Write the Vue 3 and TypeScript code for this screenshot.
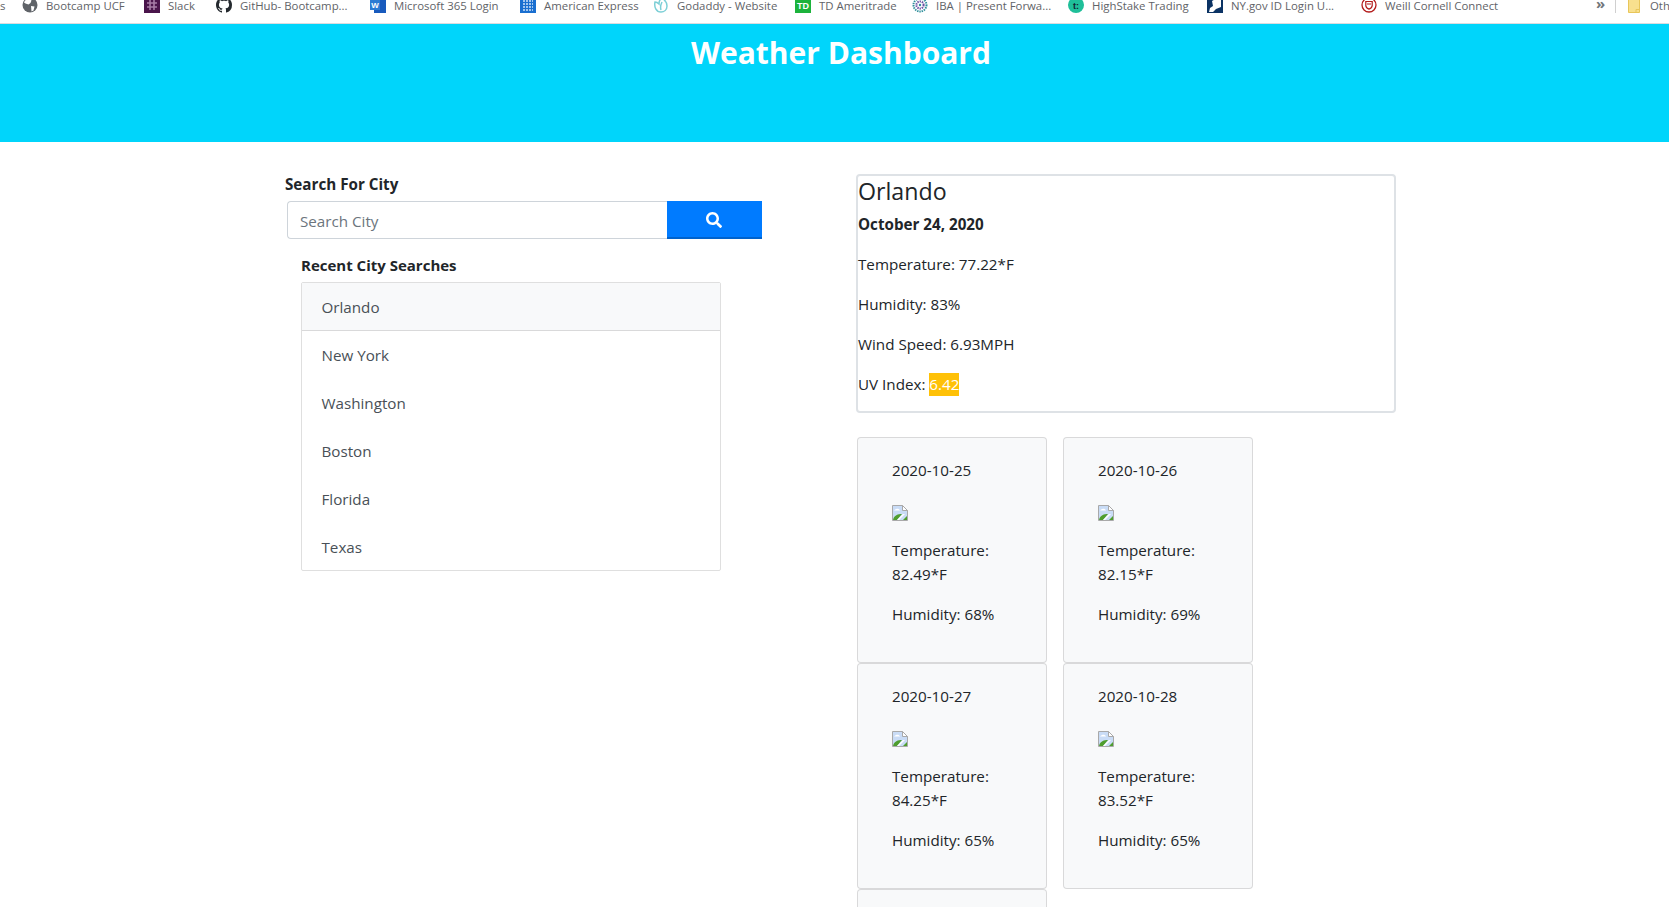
<template>
  <div class="page">
    <div class="bookmarks-bar">
      <span class="cut-off">s</span>
      <a v-for="b in bookmarks" :key="b.label" class="bookmark" :style="{ width: b.width + 'px' }">
        <svg v-if="b.kind === 'globe'" viewBox="0 0 16 16" class="fav">
          <circle cx="8" cy="8" r="7.5" fill="#5f6368" />
          <path d="M3 3.5l4-2 2.5 2-1 2.5-2 1.5-3-1-1.5-1zM9 9l3.5.5-1 4-2 1z" fill="#fff" />
        </svg>
        <svg v-else-if="b.kind === 'slack'" viewBox="0 0 16 16" class="fav">
          <rect width="16" height="16" fill="#4a154b" />
          <path d="M6 3v10M10 3v10M3 6h10M3 10h10" stroke="#a67ca6" stroke-width="1.6" />
        </svg>
        <svg v-else-if="b.kind === 'github'" viewBox="0 0 16 16" class="fav">
          <path fill="#24292e" d="M8 0C3.58 0 0 3.58 0 8c0 3.54 2.29 6.53 5.47 7.59.4.07.55-.17.55-.38 0-.19-.01-.82-.01-1.49-2.01.37-2.53-.49-2.69-.94-.09-.23-.48-.94-.82-1.13-.28-.15-.68-.52-.01-.53.63-.01 1.08.58 1.23.82.72 1.21 1.87.87 2.33.66.07-.52.28-.87.51-1.07-1.78-.2-3.64-.89-3.64-3.95 0-.87.31-1.59.82-2.15-.08-.2-.36-1.02.08-2.12 0 0 .67-.21 2.2.82.64-.18 1.32-.27 2-.27.68 0 1.36.09 2 .27 1.53-1.04 2.2-.82 2.2-.82.44 1.1.16 1.92.08 2.12.51.56.82 1.27.82 2.15 0 3.07-1.87 3.75-3.65 3.95.29.25.54.73.54 1.48 0 1.07-.01 1.93-.01 2.2 0 .21.15.46.55.38A8.013 8.013 0 0016 8c0-4.42-3.58-8-8-8z" />
        </svg>
        <svg v-else-if="b.kind === 'word'" viewBox="0 0 16 16" class="fav">
          <rect x="4" width="12" height="16" fill="#185abd" />
          <rect y="3" width="10" height="10" fill="#2b7cd3" />
          <text x="5" y="11" class="fav-text" font-size="8" fill="#fff" text-anchor="middle">W</text>
        </svg>
        <svg v-else-if="b.kind === 'amex'" viewBox="0 0 16 16" class="fav">
          <rect width="16" height="16" fill="#1a6fd0" />
          <path d="M3 4h10M3 7h10M3 10h10M3 13h10" stroke="#cfe2f7" stroke-width="1.4" stroke-dasharray="2 1" />
        </svg>
        <svg v-else-if="b.kind === 'godaddy'" viewBox="0 0 16 16" class="fav">
          <path d="M8 15C3 15 1 10 2 5c2 0 3 1 4 2 0-3 1-5 3-6 3 2 5 5 5 8 0 4-3 6-6 6zM8 13c-1-3 0-6 1-8" fill="none" stroke="#7ccfd6" stroke-width="1.5" />
        </svg>
        <svg v-else-if="b.kind === 'td'" viewBox="0 0 16 16" class="fav">
          <rect width="16" height="16" fill="#1cb33c" />
          <text x="8" y="11.5" class="fav-text" font-size="9" fill="#fff" text-anchor="middle">TD</text>
        </svg>
        <svg v-else-if="b.kind === 'iba'" viewBox="0 0 16 16" class="fav">
          <circle cx="8" cy="8" r="6.5" fill="none" stroke="#2f8f9c" stroke-width="2" stroke-dasharray="1.4 .9" />
          <circle cx="8" cy="8" r="3.6" fill="none" stroke="#6a4fa3" stroke-width="2" stroke-dasharray="1.4 .9" />
          <circle cx="8" cy="8" r="1.2" fill="#2f8f9c" />
        </svg>
        <svg v-else-if="b.kind === 'highstake'" viewBox="0 0 16 16" class="fav">
          <circle cx="8" cy="8" r="8" fill="#1fbf99" />
          <text x="8" y="11.5" class="fav-text" font-size="9" fill="#123" text-anchor="middle">t:</text>
        </svg>
        <svg v-else-if="b.kind === 'ny'" viewBox="0 0 16 16" class="fav">
          <rect width="16" height="16" fill="#0b3364" />
          <path d="M5 4l7-4h2v10l-5 2-3 3H2l1-4 3-2z" fill="#fff" />
        </svg>
        <svg v-else viewBox="0 0 16 16" class="fav">
          <circle cx="8" cy="8" r="7" fill="none" stroke="#b31b1b" stroke-width="1.3" />
          <path d="M4.8 4.5h6.4v4c0 2-1.6 3-3.2 3.6-1.6-.6-3.2-1.6-3.2-3.6zM6 7h4" fill="none" stroke="#b31b1b" stroke-width="1.2" />
        </svg>
        <span class="bookmark-label">{{ b.label }}</span>
      </a>
      <span class="more">»</span>
      <span class="bar-sep"></span>
      <svg viewBox="0 0 16 16" class="fav folder">
        <path d="M.5 0h11v15.5H.5z" fill="#f8e08e" stroke="#e8c65a" />
        <path d="M8 15.5v-3h3.5" fill="none" stroke="#e8c65a" />
      </svg>
      <span class="bookmark-label">Other bookmarks</span>
    </div>

    <header class="hero">
      <h1>Weather Dashboard</h1>
    </header>

    <main class="content">
      <section class="left">
        <label class="strong">Search For City</label>
        <div class="search-row">
          <input class="search-input" type="text" placeholder="Search City" />
          <button class="search-btn" type="button" aria-label="Search">
            <svg viewBox="0 0 512 512" width="16" height="16">
              <path fill="#fff" d="M505 442.7L405.3 343c-4.5-4.5-10.6-7-17-7H372c27.6-35.3 44-79.7 44-128C416 93.1 322.9 0 208 0S0 93.1 0 208s93.1 208 208 208c48.3 0 92.7-16.4 128-44v16.3c0 6.4 2.5 12.5 7 17l99.7 99.7c9.4 9.4 24.6 9.4 33.9 0l28.3-28.3c9.4-9.4 9.4-24.6.1-34zM208 336c-70.7 0-128-57.2-128-128 0-70.7 57.2-128 128-128 70.7 0 128 57.2 128 128 0 70.7-57.2 128-128 128z" />
            </svg>
          </button>
        </div>
        <div class="recent">
          <div class="strong recent-title">Recent City Searches</div>
          <ul class="city-list">
            <li v-for="(city, i) in cities" :key="city" :class="{ active: i === 0 }">{{ city }}</li>
          </ul>
        </div>
      </section>

      <section class="right">
        <div class="current">
          <h2>Orlando</h2>
          <p class="strong date">October 24, 2020</p>
          <p>Temperature: 77.22*F</p>
          <p>Humidity: 83%</p>
          <p>Wind Speed: 6.93MPH</p>
          <p>UV Index: <span class="uv">6.42</span></p>
        </div>
        <div class="forecast">
          <div v-for="day in forecast" :key="day.date" class="day-card">
            <p>{{ day.date }}</p>
            <p class="broken-wrap">
              <svg viewBox="0 0 16 16" class="broken">
                <path d="M.5.5h10l5 5v10H.5z" fill="#c9dcf6" stroke="#a9a9a9" />
                <path d="M10.5.5v5h5z" fill="#fff" stroke="#a9a9a9" />
                <path d="M2 5.5c2-2.500 5-2.500 6 0H2z" fill="#fff" />
                <path d="M1 15c1-5 5-6 9-6l-5 6z" fill="#4f9e2e" />
                <path d="M5 15l6-6 2 0-6 6z" fill="#fff" />
                <path d="M11 15l4-4v4z" fill="#4f9e2e" />
              </svg>
            </p>
            <p>Temperature: {{ day.temp }}</p>
            <p>Humidity: {{ day.humidity }}</p>
          </div>
        </div>
      </section>
    </main>
  </div>
</template>

<script setup lang="ts">
interface Bookmark {
  label: string
  kind: string
  width: number
}

const bookmarks: Bookmark[] = [
  { label: 'Bootcamp UCF', kind: 'globe', width: 122 },
  { label: 'Slack', kind: 'slack', width: 72 },
  { label: 'GitHub- Bootcamp...', kind: 'github', width: 154 },
  { label: 'Microsoft 365 Login', kind: 'word', width: 150 },
  { label: 'American Express', kind: 'amex', width: 133 },
  { label: 'Godaddy - Website', kind: 'godaddy', width: 142 },
  { label: 'TD Ameritrade', kind: 'td', width: 117 },
  { label: 'IBA | Present Forwa...', kind: 'iba', width: 156 },
  { label: 'HighStake Trading', kind: 'highstake', width: 139 },
  { label: 'NY.gov ID Login U...', kind: 'ny', width: 154 },
  { label: 'Weill Cornell Connect', kind: 'weill', width: 227 }
]

const cities = ['Orlando', 'New York', 'Washington', 'Boston', 'Florida', 'Texas']

const forecast = [
  { date: '2020-10-25', temp: '82.49*F', humidity: '68%' },
  { date: '2020-10-26', temp: '82.15*F', humidity: '69%' },
  { date: '2020-10-27', temp: '84.25*F', humidity: '65%' },
  { date: '2020-10-28', temp: '83.52*F', humidity: '65%' },
  { date: '2020-10-29', temp: '', humidity: '' }
]
</script>

<style>
html,
body {
  overflow: hidden;
  background: #fff;
}
</style>

<style scoped>
.page {
  height: 907px;
  overflow: hidden;
  font-family: "Open Sans", "Noto Sans", sans-serif;
  font-size: 15.2px;
  line-height: 24px;
  color: #212529;
}

.bookmarks-bar {
  height: 23px;
  box-sizing: content-box;
  border-bottom: 1px solid #dadce0;
  background: #fff;
  display: flex;
  align-items: flex-start;
  padding-left: 30px;
  position: relative;
  font-size: 11.4px;
  line-height: 11px;
  color: #5f6368;
  overflow: hidden;
}

.cut-off {
  position: absolute;
  left: 0;
  top: 0;
}

.bookmark {
  display: flex;
  align-items: flex-start;
  flex: none;
}

.bookmark .fav {
  margin-left: -8px;
}

.fav {
  width: 16px;
  height: 16px;
  flex: none;
  margin-top: -3px;
  margin-right: 8px;
}

.bookmark-label {
  white-space: nowrap;
}

.more {
  font-size: 15px;
  font-weight: 700;
  color: #70757a;
  margin-top: -2px;
  width: 19px;
  flex: none;
}

.bar-sep {
  width: 1px;
  height: 13px;
  background: #d0d0d0;
  margin-right: 12px;
  flex: none;
}

.folder {
  margin-right: 6px;
}

.hero {
  height: 118px;
  background: #00d5fb;
  color: #fff;
  text-align: center;
}

.hero h1 {
  margin: 0;
  padding: 9px 0 0 13px;
  font-size: 30px;
  line-height: 40px;
  font-weight: 700;
}

.content {
  display: flex;
  padding: 32px 0 0 285px;
}

.left {
  width: 571px;
  flex: none;
}

.strong {
  font-weight: 700;
  color: #212529;
}

label.strong {
  display: block;
  line-height: 24px;
  margin-top: -2px;
  margin-bottom: 5px;
}

.search-row {
  display: flex;
  height: 38px;
  margin-left: 2px;
  width: 475px;
}

.search-input {
  flex: 1;
  min-width: 0;
  box-sizing: border-box;
  border: 1px solid #ced4da;
  border-right: none;
  border-radius: 4px 0 0 4px;
  padding: 2px 12px 0;
  font: inherit;
  color: #495057;
  outline: none;
}

.search-input::placeholder {
  color: #6c757d;
  opacity: 1;
}

.search-btn {
  width: 95px;
  flex: none;
  border: none;
  border-bottom: 2px solid #0062cc;
  background: #007bff;
  padding: 2px 2px 0 0;
  display: flex;
  align-items: center;
  justify-content: center;
}

.recent {
  margin: 14px 0 0 16px;
  width: 420px;
}

.recent-title {
  margin-bottom: 5px;
  font-size: 15px;
}

.city-list {
  list-style: none;
  margin: 0;
  padding: 0;
  border: 1px solid rgba(0, 0, 0, 0.125);
  border-radius: 2px;
  color: #495057;
}

.city-list li {
  height: 48px;
  box-sizing: border-box;
  padding: 11.5px 20px 11px 19.5px;
}

.city-list li:last-child {
  height: 47px;
}

.city-list li.active {
  background: #f8f9fa;
  border-bottom: 1px solid rgba(0, 0, 0, 0.125);
}

.right {
  width: 540px;
}

.current {
  box-sizing: border-box;
  height: 239px;
  padding-top: 1px;
  border: 2px solid #dee2e6;
  border-radius: 4px;
}

.current h2 {
  margin: 0 0 6px;
  font-size: 23.2px;
  line-height: 29px;
  font-weight: 400;
}

.current p {
  margin: 0 0 16px;
}

.uv {
  background: #ffc107;
  color: #fff;
  display: inline-block;
  line-height: 23px;
}

.forecast {
  display: grid;
  grid-template-columns: 190px 190px;
  column-gap: 16px;
  row-gap: 0;
  margin: 24px 0 0 1px;
  align-items: start;
}

.day-card {
  box-sizing: border-box;
  height: 226px;
  border: 1px solid rgba(0, 0, 0, 0.125);
  border-radius: 4px;
  background: #f8f9fa;
  padding: 20px 20px 19px 34px;
}

.day-card p {
  margin: 0 0 16px;
}

.broken-wrap {
  height: 24px;
  display: flex;
  align-items: center;
  padding-top: 5px;
  box-sizing: border-box;
}

.broken {
  width: 16px;
  height: 16px;
}

.fav-text {
  font-family: "Liberation Sans", sans-serif;
  font-weight: 700;
}
</style>
